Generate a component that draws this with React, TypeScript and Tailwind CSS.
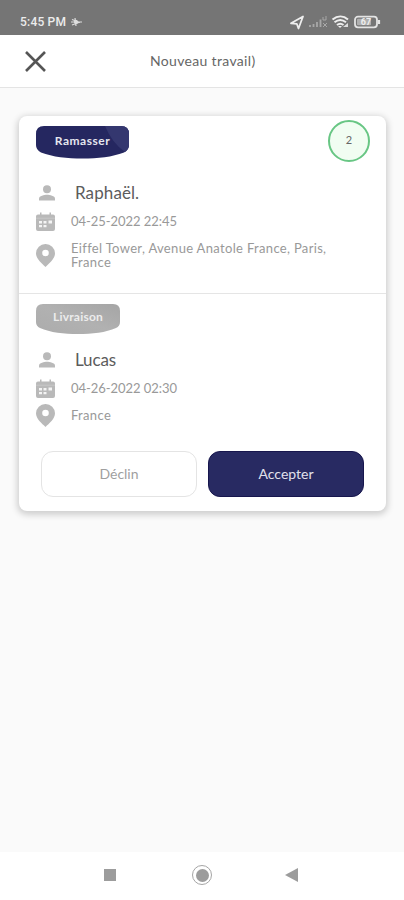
import clsx from "clsx";

type StopProps = {
  name: string;
  date: string;
  address: string;
  nameClass: string;
  addressClass: string;
};

function PersonIcon() {
  return (
    <svg width="16" height="16" viewBox="0 0 16 16" fill="#b9b9b9">
      <circle cx="8" cy="4.2" r="4" />
      <path d="M0 15.5v-2C0 11 5.300 9.800 8 9.800s8 1.200 8 3.700v2z" />
    </svg>
  );
}

function CalendarIcon() {
  return (
    <svg width="19" height="19" viewBox="0 0 19 19">
      <path
        d="M2 2.500h2V.5h1.500v2h8V.5H15v2h2a2 2 0 0 1 2 2V17a2 2 0 0 1-2 2H2a2 2 0 0 1-2-2V4.500a2 2 0 0 1 2-2z"
        fill="#b9b9b9"
      />
      <path d="M0 6.200h19" stroke="#c9c9c9" />
      <path
        d="M3 9h3v2.500H3zM7.500 9h3v2.500h-3zM12.500 8.500h3.500v3h-3.500zM3 13h3v2.200H3zM7.500 13h3v2.200h-3z"
        fill="#f4f4f4"
      />
    </svg>
  );
}

function PinIcon() {
  return (
    <svg width="19" height="23" viewBox="0 0 19 23">
      <path
        d="M9.500 0A9.400 9.400 0 0 0 0 9.300C0 15 6 19.500 9.500 23 13 19.500 19 15 19 9.300A9.400 9.400 0 0 0 9.500 0zm0 5.700a3.300 3.300 0 1 1 0 6.600 3.300 3.300 0 0 1 0-6.600z"
        fill="#b9b9b9"
      />
    </svg>
  );
}

function Stop({ name, date, address, nameClass, addressClass }: StopProps) {
  return (
    <div className="text-[13px] text-[#999]">
      <div className="flex h-7 items-center">
        <div className="flex w-[39px] shrink-0 pl-[3px]">
          <PersonIcon />
        </div>
        <span className={clsx("text-[17px] leading-5 text-[#5c5c5c]", nameClass)}>
          {name}
        </span>
      </div>
      <div className="flex h-[29px] items-center">
        <div className="w-[35px] shrink-0">
          <CalendarIcon />
        </div>
        <span className="tracking-[-0.05px]">{date}</span>
      </div>
      <div className={clsx("flex items-center", addressClass)}>
        <div className="w-[35px] shrink-0">
          <PinIcon />
        </div>
        <p className="w-[275px] pb-[2px] leading-[14px] tracking-[0.33px]">
          {address}
        </p>
      </div>
    </div>
  );
}

function StatusBar() {
  return (
    <div className="flex h-[35px] items-center justify-between bg-[#757575] pt-[9px] pr-[23px] pl-5 text-[#ececec]">
      <div className="flex items-center gap-[5px]">
        <span className="font-[Roboto,sans-serif] text-[12px] font-medium tracking-[0.2px]">
          5:45 PM
        </span>
        <svg width="11" height="10" viewBox="0 0 11 10" fill="none" stroke="#dedede">
          <path d="M1 2.500l8 3M1 8l8-3M0 5h11M4 1l1 8" strokeWidth="1.200" />
          <circle cx="5" cy="5" r="1.700" fill="#dedede" />
        </svg>
      </div>
      <svg width="92" height="16" viewBox="0 0 92 16" fill="none">
        <path d="M2 9.300L14 2.500 9.500 14.500 7.800 9.800z" stroke="#eee" strokeWidth="1.800" strokeLinejoin="round" />
        <path d="M21 11v2M24.500 10v3M28 8v5M31.500 5.500V13" stroke="#a8a8a8" strokeWidth="1.800" />
        <path d="M34 9l4 4M38 9l-4 4M34 3v3h3M37 2v4" stroke="#a8a8a8" />
        <path d="M43.500 5.500c5-4 11-4 15.500 0M45.500 8.300c3.500-2.800 8-2.800 11.500 0M48 11c2-1.600 4.500-1.600 6.500 0" stroke="#eee" strokeWidth="2" />
        <path d="M49 12h4l-2 2z" fill="#eee" />
        <path d="M54 13l5-4v4z" fill="#ddd" />
        <rect x="66" y="2.700" width="22" height="10.600" rx="3" stroke="#e4e4e4" strokeWidth="1.800" />
        <rect x="68" y="4.700" width="14" height="6.600" rx="1" fill="#b0b0b0" />
        <path d="M90 6v4" stroke="#e4e4e4" strokeWidth="2.200" />
        <text x="77" y="11.300" textAnchor="middle" fontFamily="Roboto" fontWeight="700" fontSize="9" fill="#eee">
          67
        </text>
      </svg>
    </div>
  );
}

export default function App() {
  return (
    <div className="flex h-[900px] w-[404px] flex-col overflow-hidden bg-[#fafafa] font-[Lato,sans-serif]">
      <StatusBar />

      <header className="flex h-[53px] items-center border-b border-[#e4e4e4] bg-white pl-[25px]">
        <svg width="21" height="21" viewBox="0 0 21 21" stroke="#555" strokeWidth="2.600">
          <path d="M1 1l19 19M20 1L1 20" />
        </svg>
        <h1 className="ml-[104px] pb-[2px] text-[14px] tracking-[0.33px] text-[#666]">
          Nouveau travail)
        </h1>
      </header>

      <main className="flex-1 pt-7 pl-[19px]">
        <div className="h-[395px] w-[367px] rounded-lg bg-white shadow-[0_2px_6px_2px_rgba(0,0,0,0.17)]">
          <section className="h-[177px] pt-[10px] pl-[17px]">
            <div className="flex items-start justify-between pr-4">
              <div className="relative h-[53px] w-[93px]">
                <svg className="absolute" width="93" height="33" viewBox="0 0 93 33">
                  <path
                    d="M8 0h77q8 0 8 8v11q0 5-5 7.500C76 31 62 32.500 46.500 32.500S17 31 5 26.500Q0 24 0 19V8Q0 0 8 0z"
                    fill="#252760"
                  />
                  <path d="M69 0h16q8 0 8 8v11q0 4-4 7Q76 17 69 0z" fill="#34376f" />
                </svg>
                <span className="relative block pt-[6px] text-center text-[12px] leading-[18px] font-bold tracking-[0.5px] text-[#e6e6ef]">
                  Ramasser
                </span>
              </div>
              <div className="-mt-[6px] flex size-[42px] items-center justify-center rounded-full border-2 border-[#68c684] bg-[#f1fdf2] pb-px text-[11px] text-[#666]">
                2
              </div>
            </div>
            <Stop
              name="Raphaël."
              date="04-25-2022 22:45"
              address="Eiffel Tower, Avenue Anatole France, Paris, France"
              nameClass="tracking-[0.1px]"
              addressClass="h-[39px]"
            />
          </section>

          <section className="border-t border-[#e5e5e5] pt-[10px] pl-[17px]">
            <div className="relative h-[42px] w-[84px]">
              <svg className="absolute" width="84" height="30" viewBox="0 0 84 30">
                <defs>
                  <linearGradient id="delivery" x1="0" y1="1" x2="1" y2="0">
                    <stop offset="0" stopColor="#acacac" />
                    <stop offset="0.5" stopColor="#b1b1b1" />
                    <stop offset="1" stopColor="#a5a5a5" />
                  </linearGradient>
                </defs>
                <path
                  d="M7 0h70q7 0 7 7v11q0 4-4 6C70 28.500 56 30 42 30S14 28.500 4 24Q0 22 0 18V7Q0 0 7 0z"
                  fill="url(#delivery)"
                />
              </svg>
              <span className="relative block pt-[4px] text-center text-[12px] leading-[18px] font-bold tracking-[0.2px] text-[#ececec]">
                Livraison
              </span>
            </div>
            <Stop
              name="Lucas"
              date="04-26-2022 02:30"
              address="France"
              nameClass="tracking-[-0.15px]"
              addressClass="h-[25px]"
            />
            <div className="mt-[23px] flex gap-[11px] pl-[5px] text-[14px]">
              <button className="h-[46px] w-[156px] rounded-xl border border-[#e4e4e4] pb-[2px] text-[#9f9f9f]">
                Déclin
              </button>
              <button className="h-[46px] w-[156px] rounded-xl border border-[#17164d] bg-[#282a62] pb-[2px] text-[#e1e1ec]">
                Accepter
              </button>
            </div>
          </section>
        </div>
      </main>

      <nav className="flex h-12 items-center bg-white pb-[2px] pl-[104px]">
        <div className="size-3 bg-[#9c9c9c]" />
        <div className="ml-[76px] flex size-5 items-center justify-center rounded-full border border-[#a5a5a5]">
          <div className="size-[13px] rounded-full bg-[#9c9c9c]" />
        </div>
        <svg className="ml-[73px]" width="13" height="14" viewBox="0 0 13 14">
          <path d="M13 0v14L0 7z" fill="#9c9c9c" />
        </svg>
      </nav>
    </div>
  );
}
